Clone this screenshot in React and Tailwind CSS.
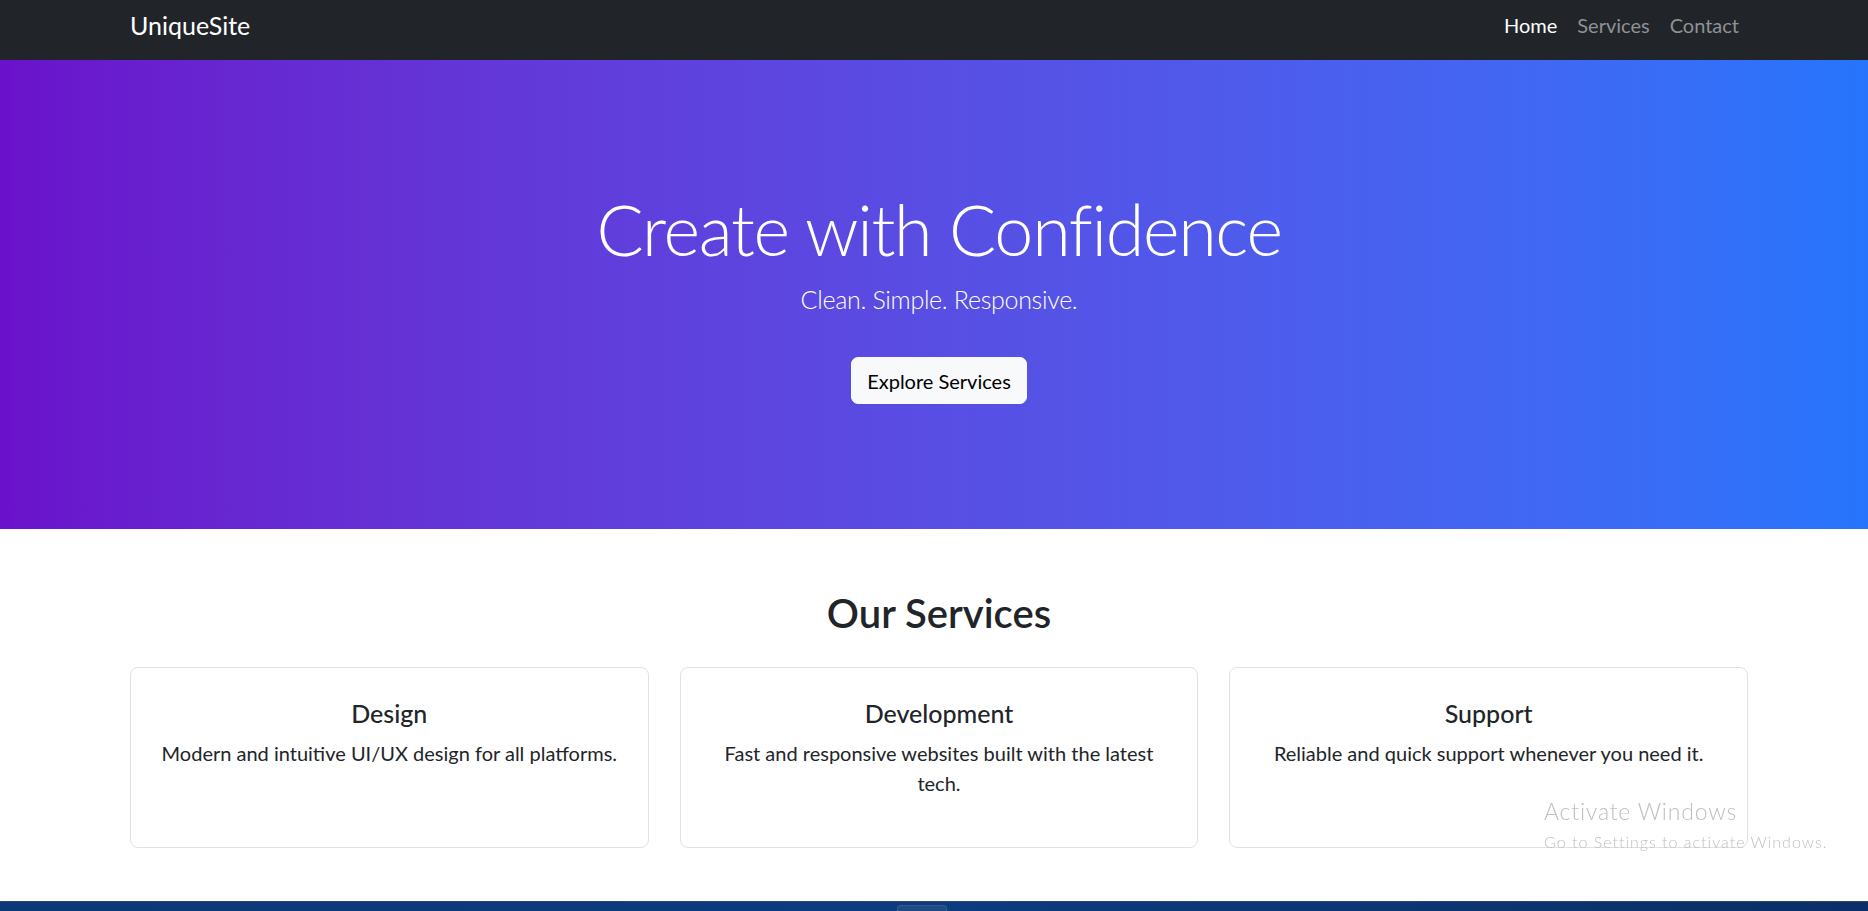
import { useState } from "react"

const services = [
  { title: "Design", text: "Modern and intuitive UI/UX design for all platforms." },
  { title: "Development", text: "Fast and responsive websites built with the latest tech." },
  { title: "Support", text: "Reliable and quick support whenever you need it." },
]

const Navbar = () => {
  const [active, setActive] = useState("Home")
  const links = ["Home", "Services", "Contact"]

  return (
    <nav className="h-[60px] bg-[#212529] flex items-center justify-between pl-[130px] pr-[119px] pb-[10px]">
      <a href="#" className="text-[25px] leading-[37px] text-white">UniqueSite</a>
      <ul className="flex">
        {links.map((link) => (
          <li key={link}>
            <a
              href="#"
              onClick={() => setActive(link)}
              className={
                active === link
                  ? "block px-[10px] text-[20px] leading-[30px] text-white"
                  : "block px-[10px] text-[20px] leading-[30px] text-[#909294]"
              }
            >
              {link}
            </a>
          </li>
        ))}
      </ul>
    </nav>
  )
}

const Hero = () => {
  return (
    <header className="h-[469px] bg-gradient-to-r from-[#6a11cb] to-[#2575fc] flex flex-col items-center pt-[127px] pl-[130px] pr-[120px] text-white text-center">
      <h1 className="text-[70px] leading-[84px] font-light tracking-[-1.3px] mb-[10px]">Create with Confidence</h1>
      <p className="text-[25px] leading-[37px] font-light tracking-[-0.3px]">Clean. Simple. Responsive.</p>
      <button className="mt-[39px] h-[47px] px-[15px] rounded-[7px] bg-[#f8f9fa] border border-[#f8f9fa] text-black text-[20px] leading-[30px]">
        Explore Services
      </button>
    </header>
  )
}

const Services = () => {
  return (
    <section className="flex-1 pt-[60px] pl-[130px] pr-[120px] text-[#212529] text-center">
      <h2 className="text-[40px] leading-[48px] font-semibold mb-[30px]">Our Services</h2>
      <div className="grid grid-cols-3 gap-[31px]">
        {services.map((s) => (
          <div key={s.title} className="h-[181px] border border-[#dee2e6] rounded-[8px] p-[30px]">
            <h5 className="text-[25px] leading-[30px] font-medium mb-[10px]">{s.title}</h5>
            <p className="text-[20px] leading-[30px]">{s.text}</p>
          </div>
        ))}
      </div>
    </section>
  )
}

export default function App() {
  return (
    <div className="min-h-screen flex flex-col bg-white font-['Lato',sans-serif] relative">
      <Navbar />
      <Hero />
      <Services />

      {/* taskbar strip */}
      <div className="h-[10px] mt-auto bg-gradient-to-r from-[#0b3878] via-[#0c3b80] to-[#0a2f66] border-t border-[#2f4466] flex items-end">
        <div className="ml-[897px] w-[50px] h-[6px] rounded-t-[4px] bg-[#1f4a85] border border-b-0 border-[#36598c]" />
      </div>

      {/* activation watermark */}
      <div className="fixed left-[1544px] top-[795px] text-[#bfbfbf] pointer-events-none">
        <p className="text-[23px] leading-[32px] font-light tracking-[0.8px]">Activate Windows</p>
        <p className="mt-[3px] text-[16px] leading-[24px] font-light tracking-[1px]">Go to Settings to activate Windows.</p>
      </div>
    </div>
  )
}
